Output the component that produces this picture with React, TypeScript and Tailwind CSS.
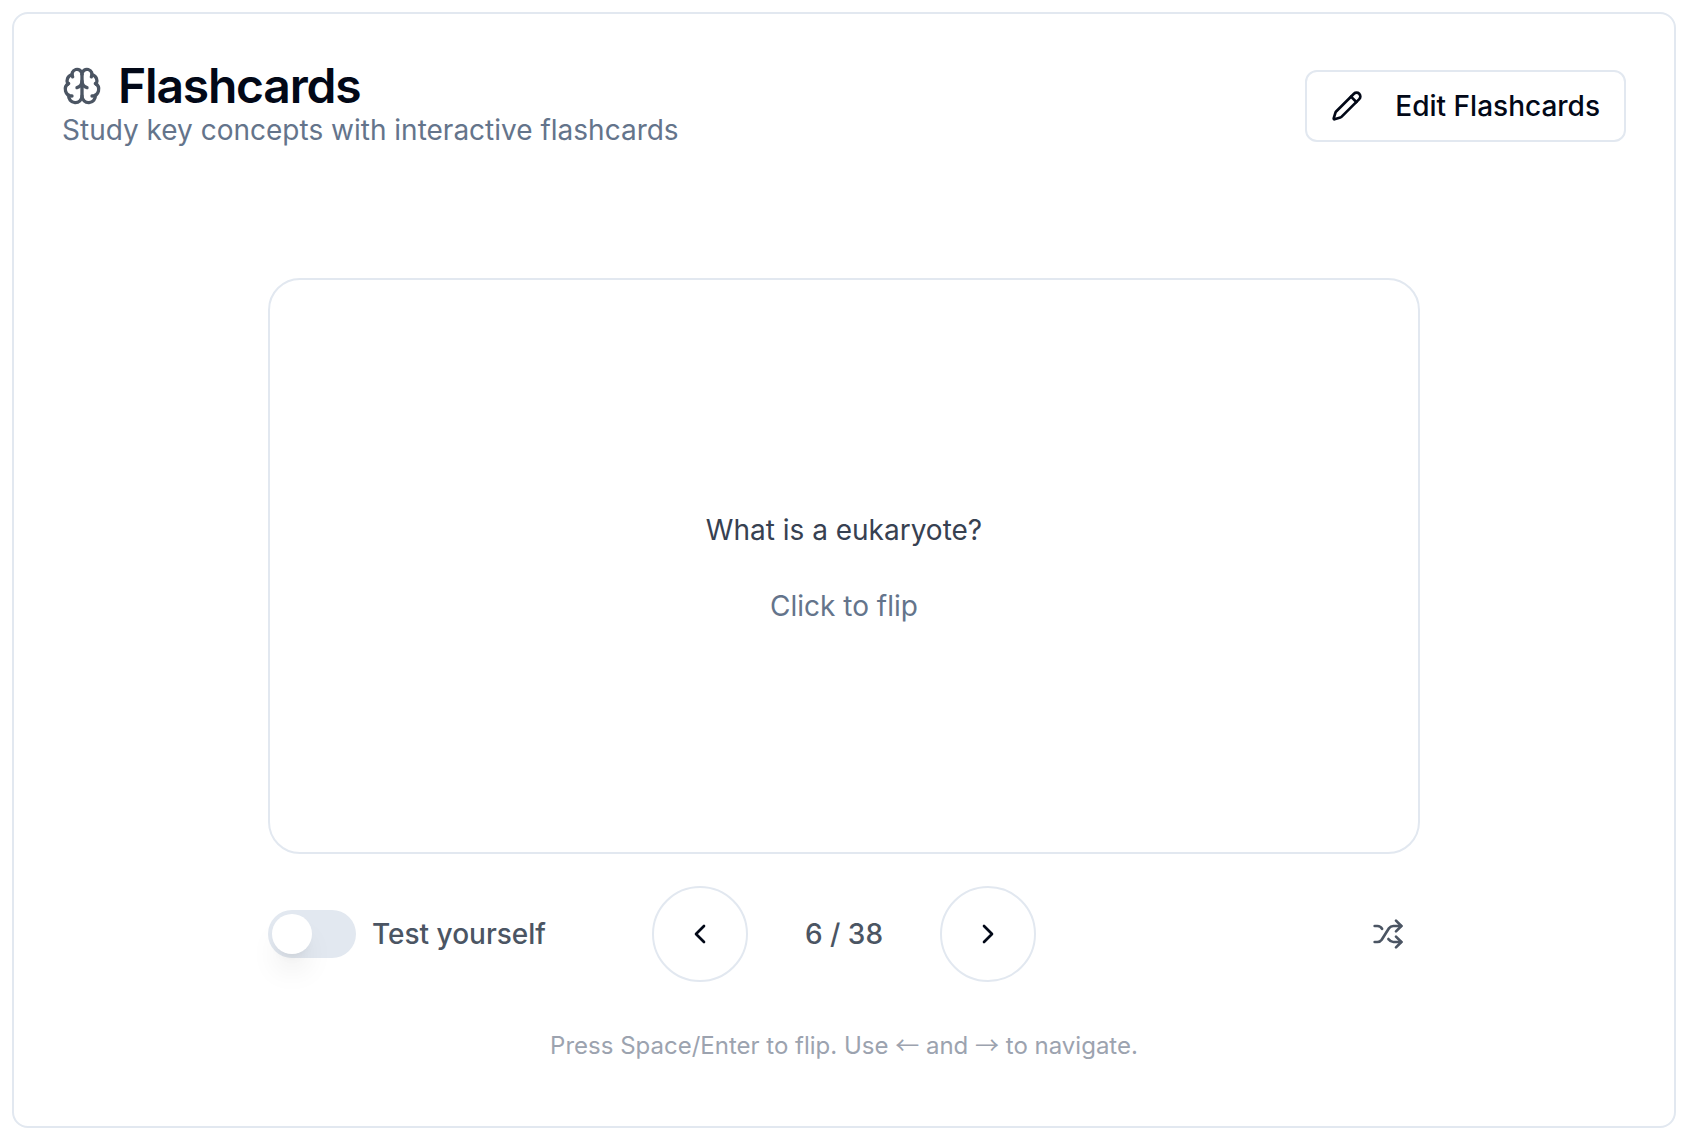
import { useEffect, useState } from 'react'
import { Brain, ChevronLeft, ChevronRight, Pencil, Shuffle } from 'lucide-react'

const TOTAL_CARDS = 38

export default function App() {
  const [index, setIndex] = useState(5)
  const [testMode, setTestMode] = useState(false)

  const prev = () => setIndex((i) => (i + TOTAL_CARDS - 1) % TOTAL_CARDS)
  const next = () => setIndex((i) => (i + 1) % TOTAL_CARDS)
  const shuffle = () => setIndex(Math.floor(Math.random() * TOTAL_CARDS))

  useEffect(() => {
    const onKeyDown = (e: KeyboardEvent) => {
      if (e.key === 'ArrowLeft') prev()
      if (e.key === 'ArrowRight') next()
    }
    window.addEventListener('keydown', onKeyDown)
    return () => window.removeEventListener('keydown', onKeyDown)
  }, [])

  return (
    <div className="bg-white p-3 font-['Inter',sans-serif] text-[#020817]">
      <main className="rounded-2xl border-2 border-[#e2e8f0] bg-white">
        <header className="flex items-center justify-between p-12">
          <div>
            <h1 className="flex items-center gap-4 text-5xl leading-12 font-semibold tracking-tight">
              <Brain className="size-10 text-[#4b5563]" />
              Flashcards
            </h1>
            <p className="text-[28px] leading-10 text-[#64748b]">Study key concepts with interactive flashcards</p>
          </div>
          <button
            type="button"
            className="flex h-18 items-center gap-8 rounded-xl border-2 border-[#e2e8f0] px-6 text-[28px] leading-10 font-medium"
          >
            <Pencil className="size-8" />
            Edit Flashcards
          </button>
        </header>

        <div className="px-12 pt-20 pb-16">
          <div className="mx-auto max-w-6xl">
            <button
              type="button"
              className="flex h-144 w-full flex-col items-center justify-center gap-8 rounded-4xl border-2 border-[#e2e8f0] text-[28px]"
            >
              <span className="leading-12 text-[#374151]">What is a eukaryote?</span>
              <span className="leading-10 text-[#64748b]">Click to flip</span>
            </button>

            <div className="mt-8 grid grid-cols-3 items-center text-[28px] leading-10 font-medium text-[#4b5563]">
              <div className="flex items-center gap-4">
                <input
                  id="test-mode"
                  type="checkbox"
                  role="switch"
                  checked={testMode}
                  onChange={(e) => setTestMode(e.target.checked)}
                  className="flex h-12 w-22 appearance-none items-center rounded-full bg-[#e2e8f0] p-1 before:size-10 before:rounded-full before:bg-white before:shadow-[0_20px_30px_-6px_rgb(0_0_0/0.1),0_8px_12px_-8px_rgb(0_0_0/0.1)] before:transition-transform before:content-[''] checked:bg-[#020817] checked:before:translate-x-10"
                />
                <label htmlFor="test-mode">Test yourself</label>
              </div>

              <div className="flex items-center justify-center gap-8">
                <button
                  type="button"
                  aria-label="Previous card"
                  onClick={prev}
                  className="flex size-24 items-center justify-center rounded-full border-2 border-[#e2e8f0] text-[#020817]"
                >
                  <ChevronLeft className="size-8" />
                </button>
                <span className="w-32 text-center">
                  {index + 1} / {TOTAL_CARDS}
                </span>
                <button
                  type="button"
                  aria-label="Next card"
                  onClick={next}
                  className="flex size-24 items-center justify-center rounded-full border-2 border-[#e2e8f0] text-[#020817]"
                >
                  <ChevronRight className="size-8" />
                </button>
              </div>

              <button type="button" aria-label="Shuffle cards" onClick={shuffle} className="justify-self-end p-4">
                <Shuffle className="size-8" />
              </button>
            </div>

            <p className="mt-12 text-center text-2xl leading-8 text-[#9ca3af]">
              Press Space/Enter to flip. Use{' '}
              <span className="font-['Noto_Sans_CJK_JP',sans-serif] leading-none">←</span> and{' '}
              <span className="font-['Noto_Sans_CJK_JP',sans-serif] leading-none">→</span> to navigate.
            </p>
          </div>
        </div>
      </main>
    </div>
  )
}
